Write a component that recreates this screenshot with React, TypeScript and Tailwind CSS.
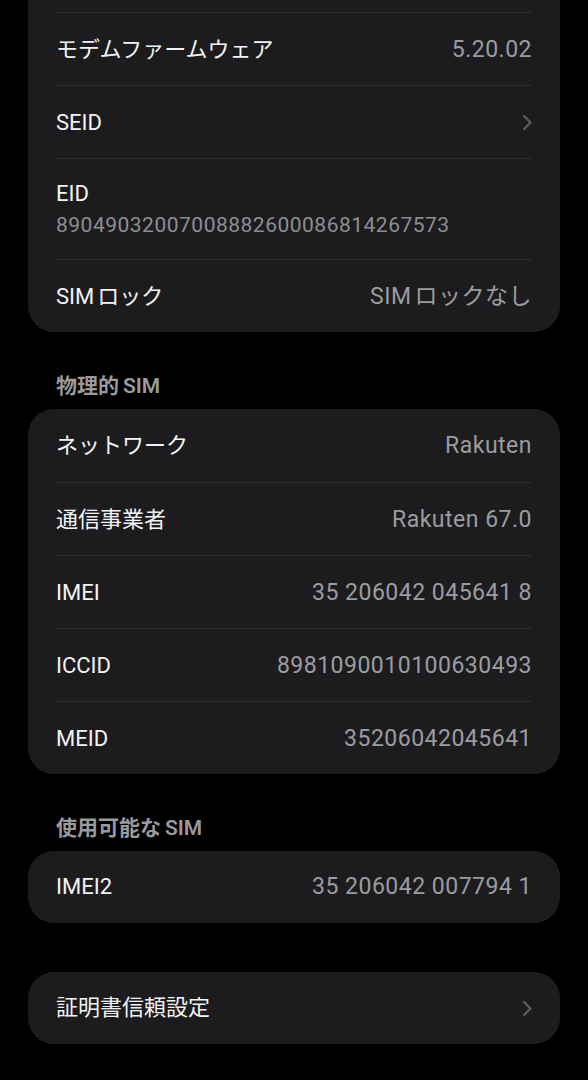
import React from "react";

const FONT = "font-['Roboto','Noto_Sans_CJK_JP',sans-serif]";

function Chevron() {
  return (
    <svg width="10" height="17" viewBox="0 0 10 17" fill="none" className="shrink-0">
      <polyline
        points="2,2 8.5,8.5 2,15"
        stroke="#5e5e62"
        strokeWidth="2.2"
        strokeLinecap="round"
        strokeLinejoin="round"
      />
    </svg>
  );
}

type RowProps = {
  label: React.ReactNode;
  value?: React.ReactNode;
  chevron?: boolean;
  first?: boolean;
};

function Row({ label, value, chevron, first }: RowProps) {
  return (
    <div className="h-[73px] px-[28px]">
      <div
        className={
          (first ? "" : "border-t border-[#2d2d30] ") +
          "h-full flex items-center justify-between pt-[1px]"
        }
      >
        <span className="text-[22px] leading-[28px] text-[#f3f3f3]">{label}</span>
        {value && (
          <span className="text-[23px] leading-[28px] text-[#9c9ca0] tracking-[0.5px]">
            {value}
          </span>
        )}
        {chevron && <Chevron />}
      </div>
    </div>
  );
}

function Header({ cjk }: { cjk: string }) {
  return (
    <div className="pt-[42px] pb-[11px] px-[56px]">
      <div className="text-[21px] leading-[24px] font-semibold text-[#9a9a9e]">
        {cjk}
        <span className="ml-[4px]">SIM</span>
      </div>
    </div>
  );
}

const SimLock = ({ suffix }: { suffix: string }) => (
  <>
    SIM<span className="ml-[3px]">{suffix}</span>
  </>
);

export default function App() {
  return (
    <div className={`${FONT} bg-black w-[588px] h-[1080px] overflow-hidden`}>
      <div className="px-[28px]">
        {/* Card 1 (top clipped off-screen) */}
        <div className="bg-[#1c1c1e] rounded-b-[26px]">
          <div className="h-[12px]" />
          <Row label="モデムファームウェア" value="5.20.02" />
          <Row label="SEID" chevron />
          <div className="h-[101px] px-[28px]">
            <div className="border-t border-[#2d2d30] h-full flex flex-col justify-center gap-[4px]">
              <span className="text-[22px] leading-[28px] text-[#f3f3f3]">EID</span>
              <span className="text-[21px] leading-[26px] text-[#8e8e92] tracking-[0.5px]">
                89049032007008882600086814267573
              </span>
            </div>
          </div>
          <Row label={<SimLock suffix="ロック" />} value={<SimLock suffix="ロックなし" />} />
        </div>
      </div>

      <Header cjk="物理的" />
      <div className="px-[28px]">
        <div className="bg-[#1c1c1e] rounded-[26px]">
          <Row label="ネットワーク" value="Rakuten" first />
          <Row label="通信事業者" value="Rakuten 67.0" />
          <Row label="IMEI" value="35 206042 045641 8" />
          <Row label="ICCID" value="8981090010100630493" />
          <Row label="MEID" value="35206042045641" />
        </div>
      </div>

      <Header cjk="使用可能な" />
      <div className="px-[28px]">
        <div className="bg-[#1c1c1e] rounded-[26px] h-[72px] px-[28px] flex items-center justify-between">
          <span className="text-[22px] leading-[28px] text-[#f3f3f3]">IMEI2</span>
          <span className="text-[23px] leading-[28px] text-[#9c9ca0] tracking-[0.5px]">
            35 206042 007794 1
          </span>
        </div>
      </div>

      <div className="px-[28px] pt-[49px]">
        <div className="bg-[#1c1c1e] rounded-[26px] h-[72px] px-[28px] flex items-center justify-between">
          <span className="text-[22px] leading-[28px] text-[#f3f3f3]">証明書信頼設定</span>
          <Chevron />
        </div>
      </div>
    </div>
  );
}
